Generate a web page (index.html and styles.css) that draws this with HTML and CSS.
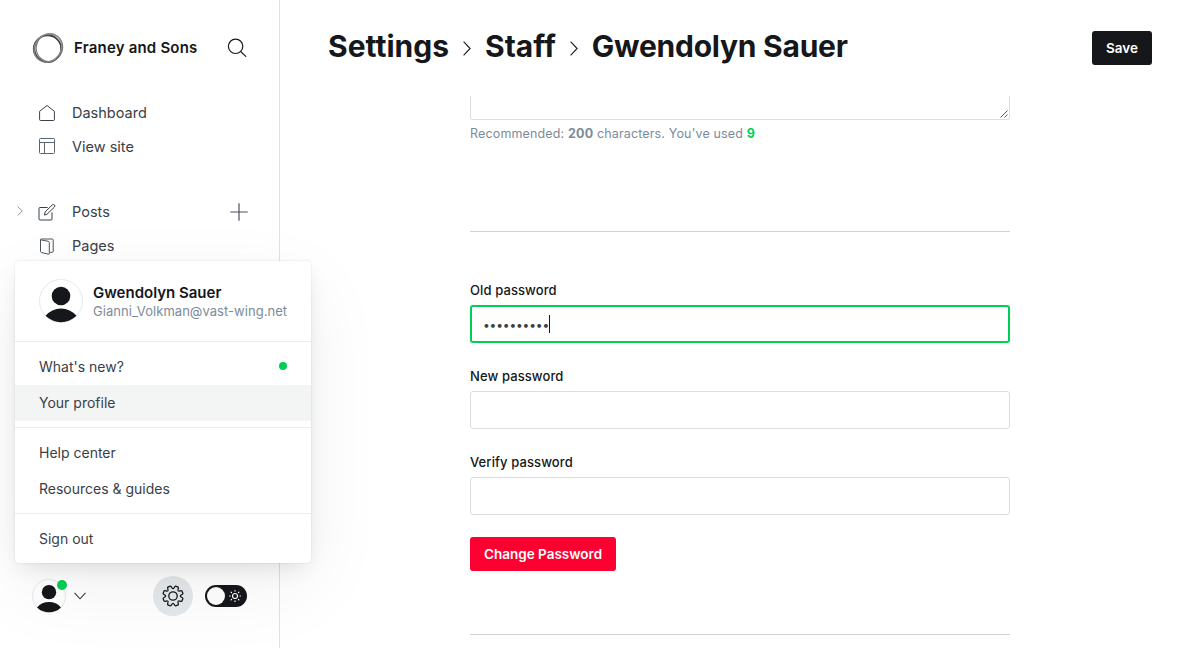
FILE: index.html
```html
<!DOCTYPE html>
<html lang="en">
<head>
<meta charset="utf-8">
<title>Settings - Staff</title>
<link rel="stylesheet" href="styles.css">
</head>
<body>
<div class="app">
  <nav class="sidebar">
    <header class="site">
      <svg class="logo" width="32" height="32" viewBox="0 0 32 32" fill="none">
        <ellipse cx="15.4" cy="16.8" rx="13.9" ry="13.2" stroke-width="1.3" stroke="#444"/>
        <ellipse cx="15.8" cy="16.6" rx="13.2" ry="13.6" stroke-width="1.3" stroke="#444"/>
        <ellipse cx="17.2" cy="15.2" rx="13.1" ry="13.9" stroke-width="1.2" stroke="#777" transform="rotate(20 16 16)"/>
        <ellipse cx="16" cy="15.8" rx="15" ry="13" stroke-width="1.2" stroke="#888" transform="rotate(-50 16 16)"/>
      </svg>
      <span class="site-name">Franey and Sons</span>
      <svg class="search" width="20" height="20" viewBox="0 0 20 20" fill="none" stroke="#15171a" stroke-width="1.2" stroke-linecap="round"><circle cx="8.6" cy="8.3" r="7.2"/><path d="M13.8 13.6l5 4.8"/></svg>
    </header>
    <ul class="nav">
      <li class="nav-item"><svg class="nav-icon" width="16" height="16" viewBox="0 0 16 16" fill="none" stroke="#394047" stroke-linejoin="round"><path d="M.6 6.3L8 .5l7.400 5.800v8.300a.9.9 0 0 1-.9.9h-13a.9.9 0 0 1-.9-.9z"/></svg><span class="nav-text">Dashboard</span></li>
      <li class="nav-item"><svg class="nav-icon up" width="16" height="16" viewBox="0 0 16 16" fill="none" stroke="#5b636b"><rect x=".5" y=".5" width="15" height="15" rx="1"/><path d="M.5 4.500h15M5.500 4.500v11"/></svg><span class="nav-text">View site</span></li>
    </ul>
    <ul class="nav content-nav">
      <li class="nav-item"><svg class="expand" width="6" height="10" viewBox="0 0 6 10" fill="none" stroke="#8e979f"><path d="M.6.600L5.300 5 .6 9.400"/></svg><svg class="nav-icon" width="17" height="17" viewBox="0 0 17 17" fill="none" stroke="#394047" stroke-linejoin="round" stroke-linecap="round"><path d="M8.700 3.500H1.500a1 1 0 0 0-1 1v10.500a1 1 0 0 0 1 1h11a1 1 0 0 0 1-1V8.800"/><path d="M6 10.700l.7-2.800 7-7a1.500 1.500 0 0 1 2.200 2.200L8.800 10z"/></svg><span class="nav-text">Posts</span><svg class="plus" width="18" height="18" viewBox="0 0 18 18" stroke="#4b535b" stroke-width="1.200"><path d="M9 .3v17.400M.3 9h17.400"/></svg></li>
      <li class="nav-item"><svg class="nav-icon" width="16" height="17" viewBox="0 0 16 17" fill="none" stroke="#4b535b" stroke-linejoin="round"><path d="M1.500 1.900c0-.5.3-.9.9-.9h10.800c.6 0 1 .4 1 1v11.200c0 .7-.4 1.100-1 1.100h-2.100"/><path d="M1.500 1.800l7.700 1.500c.7.200 1.100.6 1.100 1.300v10.900c0 .6-.4.9-1 .7l-6.900-1.700c-.6-.2-.9-.5-.9-1.100z"/></svg><span class="nav-text">Pages</span></li>
    </ul>
    <footer class="account">
      <div class="avatar small"><svg width="34" height="34" viewBox="0 0 44 44"><circle cx="22" cy="17" r="9.300" fill="#15171a"/><path d="M6.500 36.800a20.300 20.300 0 0 1 31 0 22 22 0 0 1-31 0z" fill="#15171a"/></svg><i class="badge"></i></div>
      <svg class="chevron" width="12" height="8" viewBox="0 0 12 8" fill="none" stroke="#394047" stroke-width="1.100"><path d="M.5.800L6 6.800 11.500.800"/></svg>
      <div class="gear"><svg width="24" height="24" viewBox="-12 -12 24 24" fill="none" stroke="#15171a" stroke-width="1.300"><defs><path id="tooth" d="M0-7.300C1.200-7.300 1.300-9.900 2.600-9.900L5.170-8.840C6.080-7.920 4.310-6.010 5.160-5.160"/></defs><use href="#tooth"/><use href="#tooth" transform="rotate(45)"/><use href="#tooth" transform="rotate(90)"/><use href="#tooth" transform="rotate(135)"/><use href="#tooth" transform="rotate(180)"/><use href="#tooth" transform="rotate(225)"/><use href="#tooth" transform="rotate(270)"/><use href="#tooth" transform="rotate(315)"/><circle r="4.200"/></svg></div>
      <div class="toggle"><i class="knob"></i><svg width="14" height="14" viewBox="-7 -7 14 14" fill="none" stroke="#fff" stroke-linecap="round"><circle r="2.500" stroke-width="1.200"/><path stroke-width="1.200" d="M0-4.900v-.6M0 4.900v.6M-4.900 0h-.6M4.900 0h.6M3.500-3.500l.4-.4M-3.500-3.500l-.4-.4M3.500 3.500l.4.400M-3.500 3.500l-.4.400"/></svg></div>
    </footer>
  </nav>

  <main class="main">
    <header class="page-head">
      <h1 class="crumbs"><span class="crumb">Settings</span><svg width="8" height="15" viewBox="0 0 8 15" fill="none" stroke="#15171a" stroke-width="1.100"><path d="M.6.700l6.500 6.800-6.500 6.800"/></svg><span class="crumb">Staff</span><svg width="8" height="15" viewBox="0 0 8 15" fill="none" stroke="#15171a" stroke-width="1.100"><path d="M.6.700l6.500 6.800-6.500 6.800"/></svg><span class="crumb current">Gwendolyn Sauer</span></h1>
      <button class="btn save">Save</button>
    </header>
    <section class="form">
      <div class="bio"><svg width="8" height="8" viewBox="0 0 8 8" stroke="#444" stroke-width=".9"><path d="M.5 7.500l7-7M4.500 7.500l3-3"/></svg></div>
      <p class="hint">Recommended: <b>200</b> characters. You've used <b class="count">9</b></p>
      <hr class="rule">
      <div class="field"><label>Old password</label><div class="input focus"><span class="dots">••••••••••</span><i class="caret"></i></div></div>
      <div class="field"><label>New password</label><div class="input"></div></div>
      <div class="field"><label>Verify password</label><div class="input"></div></div>
      <button class="btn danger">Change Password</button>
      <hr class="rule last">
    </section>
  </main>

  <aside class="menu">
    <div class="profile">
      <div class="avatar"><svg width="44" height="44" viewBox="0 0 44 44"><circle cx="22" cy="17" r="9.300" fill="#15171a"/><path d="M6.500 36.800a20.300 20.300 0 0 1 31 0 22 22 0 0 1-31 0z" fill="#15171a"/></svg></div>
      <div class="who"><strong>Gwendolyn Sauer</strong><span>Gianni_Volkman@vast-wing.net</span></div>
    </div>
    <div class="group"><a>What's new?<i class="dot"></i></a><a class="active">Your profile</a></div>
    <div class="group"><a>Help center</a><a>Resources &amp; guides</a></div>
    <div class="group"><a>Sign out</a></div>
  </aside>
</div>
</body>
</html>
```
FILE: styles.css
```css
* { box-sizing: border-box; }
body { margin: 0; font-family: Inter, "Liberation Sans", sans-serif; color: #15171a; letter-spacing: .2px; background: #fff; }
i { display: block; }
svg { flex: none; }
.app { position: relative; display: flex; height: 648px; overflow: hidden; }
.sidebar { display: flex; flex-direction: column; width: 280px; border-right: 1px solid #dfe1e3; }
.site { display: flex; align-items: center; height: 96px; padding: 0 32px; }
.site-name { margin-left: 10px; padding-bottom: 2px; font-size: 15px; font-weight: 600; letter-spacing: .2px; white-space: nowrap; }
.search { margin-left: auto; }
.nav { list-style: none; margin: 0; padding: 0 31px 0 38px; }
.content-nav { margin-top: 31px; }
.nav-item { position: relative; display: flex; align-items: center; height: 34px; font-size: 14.5px; letter-spacing: 0; color: #394047; }
.nav-text { padding-bottom: 2px; }
.nav-icon { width: 18px; margin-right: 16px; }
.up { margin-top: -2px; }
.expand { position: absolute; left: -21px; top: 11px; }
.plus { margin-left: auto; }
.account { display: flex; align-items: center; margin: auto 32px 32px; height: 40px; }
.avatar { position: relative; width: 44px; height: 44px; border-radius: 50%; border: 1px solid #e6e8ea; }
.avatar svg { display: block; margin: -1px; }
.small { width: 34px; height: 34px; }
.badge { position: absolute; right: -2px; top: 0; width: 10px; height: 10px; border-radius: 50%; background: #00cf56; }
.chevron { margin-left: 8px; }
.gear { display: flex; align-items: center; justify-content: center; width: 40px; height: 40px; margin-left: 67px; border-radius: 50%; background: #e4e8eb; }
.toggle { display: flex; align-items: center; justify-content: space-between; width: 42px; height: 22px; margin-left: 12px; padding: 0 5px 0 2px; border-radius: 11px; background: #15171a; flex: none; }
.knob { width: 18px; height: 18px; border-radius: 50%; background: #fff; }
.main { flex: 1; }
.page-head { display: flex; align-items: center; justify-content: space-between; height: 96px; padding: 0 48px; }
.crumbs { display: flex; align-items: center; margin: 0; font-size: 30px; font-weight: 700; letter-spacing: 0; line-height: 30px; white-space: nowrap; }
.crumb { padding-bottom: 4px; }
.current { letter-spacing: -.25px; }
.crumbs svg { margin: 0 14px; }
.btn { display: block; height: 34px; padding: 0 14px; border: 0; border-radius: 3px; color: #fff; font: 600 13.5px Inter, sans-serif; letter-spacing: 0; white-space: nowrap; }
.save { width: 60px; background: #15171a; }
.danger { width: 146px; background: #fb0030; margin-top: -3px; }
.form { width: 540px; margin-left: 190px; }
.bio { display: flex; align-items: flex-end; justify-content: flex-end; height: 24px; padding: 1px; border: 1px solid #dbdddf; border-top: 0; border-radius: 0 0 3px 3px; }
.hint { margin: 5px 0 0; height: 18px; font-size: 12.5px; line-height: 18px; letter-spacing: .15px; color: #7c8b9a; }
.hint b { font-weight: 700; }
.hint .count { color: #00cf56; }
.rule { height: 1px; margin: 88px 0 50px; border: 0; background: #d0d3d5; }
.last { margin: 63px 0 0; }
.field { margin-bottom: 25px; }
.field label { display: block; height: 23px; font-size: 13px; font-weight: 500; line-height: 17px; letter-spacing: .1px; }
.input { display: flex; align-items: center; height: 38px; border: 1px solid #dbdddf; border-radius: 3px; }
.focus { border: 2px solid #00cf56; padding: 0 11px; }
.dots { padding-top: 1px; font-size: 12px; line-height: 20px; letter-spacing: -.15px; color: #394047; }
.caret { width: 1px; height: 18px; background: #15171a; }
.menu { position: absolute; left: 15px; top: 261px; width: 296px; height: 302px; border-radius: 4px; background: #fff; box-shadow: 0 0 2px rgba(0,0,0,.12), 0 8px 22px -6px rgba(0,0,0,.12), 0 25px 80px rgba(0,0,0,.06); }
.profile { display: flex; align-items: center; height: 80px; padding: 0 24px; }
.who { display: flex; flex-direction: column; margin-left: 10px; white-space: nowrap; }
.who strong { font-size: 15px; line-height: 19px; font-weight: 600; letter-spacing: 0; }
.who span { font-size: 13px; line-height: 18px; letter-spacing: .04px; color: #7c8b9a; }
.group { border-top: 1px solid #e9ebec; padding: 6px 0; }
.group a { display: flex; align-items: center; justify-content: space-between; height: 37px; padding: 0 24px 1px; font-size: 14px; letter-spacing: 0; color: #394047; }
.group a + a { height: 36px; }
.group .active { background: #f3f5f5; }
.dot { width: 8px; height: 8px; border-radius: 50%; background: #00cf56; }
```
